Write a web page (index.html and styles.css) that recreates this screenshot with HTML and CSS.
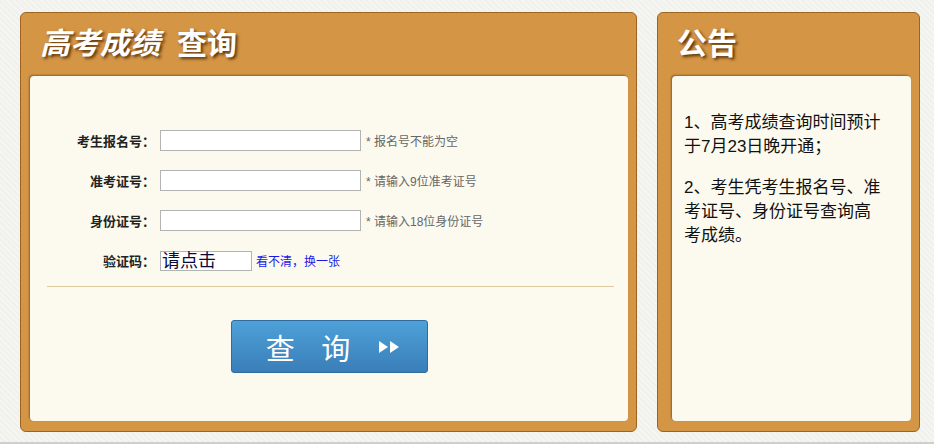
FILE: index.html
```html
<!DOCTYPE html>
<html lang="zh-CN">
<head>
    <meta charset="UTF-8">
    <meta name="viewport" content="width=device-width, initial-scale=1.0">
    <title>高考成绩查询</title>
    <link rel="stylesheet" href="styles.css">
</head>
<body>
    <div class="page">
        <!-- query form -->
        <div class="panel panel-main">
            <h2 class="panel-title"><span class="slant">高考成绩</span><span class="title-rest">查询</span></h2>
            <div class="panel-body">
                <form class="query-form" onsubmit="return false;">
                    <div class="form-row">
                        <label class="form-label">考生报名号：</label>
                        <input class="form-input" type="text">
                        <span class="form-hint">* 报名号不能为空</span>
                    </div>
                    <div class="form-row">
                        <label class="form-label">准考证号：</label>
                        <input class="form-input" type="text">
                        <span class="form-hint">* 请输入9位准考证号</span>
                    </div>
                    <div class="form-row">
                        <label class="form-label">身份证号：</label>
                        <input class="form-input" type="text">
                        <span class="form-hint">* 请输入18位身份证号</span>
                    </div>
                    <div class="form-row">
                        <label class="form-label">验证码：</label>
                        <span class="captcha">请点击</span>
                        <a class="captcha-link" href="#">看不清，换一张</a>
                    </div>
                    <div class="divider"></div>
                    <div class="btn-wrap">
                        <button class="query-btn" type="submit">
                            <span class="btn-text">查 询</span>
                            <svg class="btn-arrows" width="22" height="14" viewBox="0 0 22 14">
                                <polygon points="1,1 10,7 1,13" fill="#fff"/>
                                <polygon points="12,1 21,7 12,13" fill="#fff"/>
                            </svg>
                        </button>
                    </div>
                </form>
            </div>
        </div>

        <!-- notice -->
        <div class="panel panel-side">
            <h2 class="panel-title">公告</h2>
            <div class="panel-body notice">
                <p>1、高考成绩查询时间预计于7月23日晚开通；</p>
                <p>2、考生凭考生报名号、准考证号、身份证号查询高考成绩。</p>
            </div>
        </div>
    </div>
</body>
</html>
```

FILE: styles.css
```css
body {
    margin: 0;
    font-family: "Liberation Sans", "Noto Sans CJK SC", sans-serif;
    background-color: #f5f5f2;
    background-image: repeating-linear-gradient(45deg, rgba(0,0,0,0.02) 0 2px, transparent 2px 4px);
}

.page {
    display: flex;
    gap: 20px;
    padding: 12px 0 10px 20px;
    border-bottom: 2px solid #cfcfcf;
}

.panel {
    height: 420px;
    box-sizing: border-box;
    background-color: #d49545;
    border: 1px solid #9c6321;
    border-radius: 6px;
    display: flex;
    flex-direction: column;
}

.panel-main {
    width: 617px;
}

.panel-side {
    width: 263px;
}

.panel-title {
    margin: 0;
    height: 63px;
    line-height: 62px;
    padding-left: 19px;
    color: #fff;
    font-size: 30px;
    font-weight: bold;
    text-shadow: 2px 2px 3px rgba(70, 35, 0, 0.85);
}

.slant {
    font-style: italic;
}

.title-rest {
    margin-left: 17px;
}

.panel-body {
    flex: 1;
    background-color: #fcfaee;
    border-radius: 4px;
    box-shadow: -1px -1px 2px rgba(0, 0, 0, 0.35);
    margin: 0 8px 10px 9px;
}

.panel-side .panel-body {
    margin-left: 14px;
}

/* form */
.query-form {
    padding-top: 54px;
}

.form-row {
    display: flex;
    align-items: center;
    height: 21px;
    margin-bottom: 19px;
}

.form-label {
    width: 125px;
    text-align: right;
    font-size: 13px;
    font-weight: bold;
    color: #222;
}

.form-input {
    width: 201px;
    height: 21px;
    box-sizing: border-box;
    margin: 0 0 0 5px;
    border: 1px solid #b3b3b3;
    background: #fff;
    padding: 0 3px;
}

.form-hint {
    margin-left: 5px;
    font-size: 12px;
    color: #666;
}

.captcha {
    width: 92px;
    height: 20px;
    box-sizing: border-box;
    margin-left: 5px;
    border: 1px solid #b3b3b3;
    background: #fff;
    font-size: 18px;
    line-height: 18px;
    color: #0a0a3a;
    padding-left: 1px;
}

.captcha-link {
    margin-left: 4px;
    font-size: 12px;
    color: #1a1ae6;
    text-decoration: none;
}

.divider {
    height: 1px;
    background-color: #dccb9c;
    margin: -4px 14px 0 17px;
}

.btn-wrap {
    display: flex;
    justify-content: center;
    padding-top: 33px;
}

.query-btn {
    width: 197px;
    height: 53px;
    border: 1px solid #2f6b9c;
    border-radius: 3px;
    background: linear-gradient(#4ea1d9, #3a7eb8);
    color: #fff;
    display: flex;
    align-items: center;
    justify-content: center;
    gap: 18px;
    padding: 0 0 0 8px;
    cursor: pointer;
    font-family: "Noto Sans CJK SC", sans-serif;
}

.btn-text {
    font-size: 29px;
    letter-spacing: 10px;
}

/* notice */
.notice {
    padding: 35px 25px 0 12px;
}

.notice p {
    margin: 0 0 17px;
    font-size: 17px;
    line-height: 24px;
    color: #111;
}
```
